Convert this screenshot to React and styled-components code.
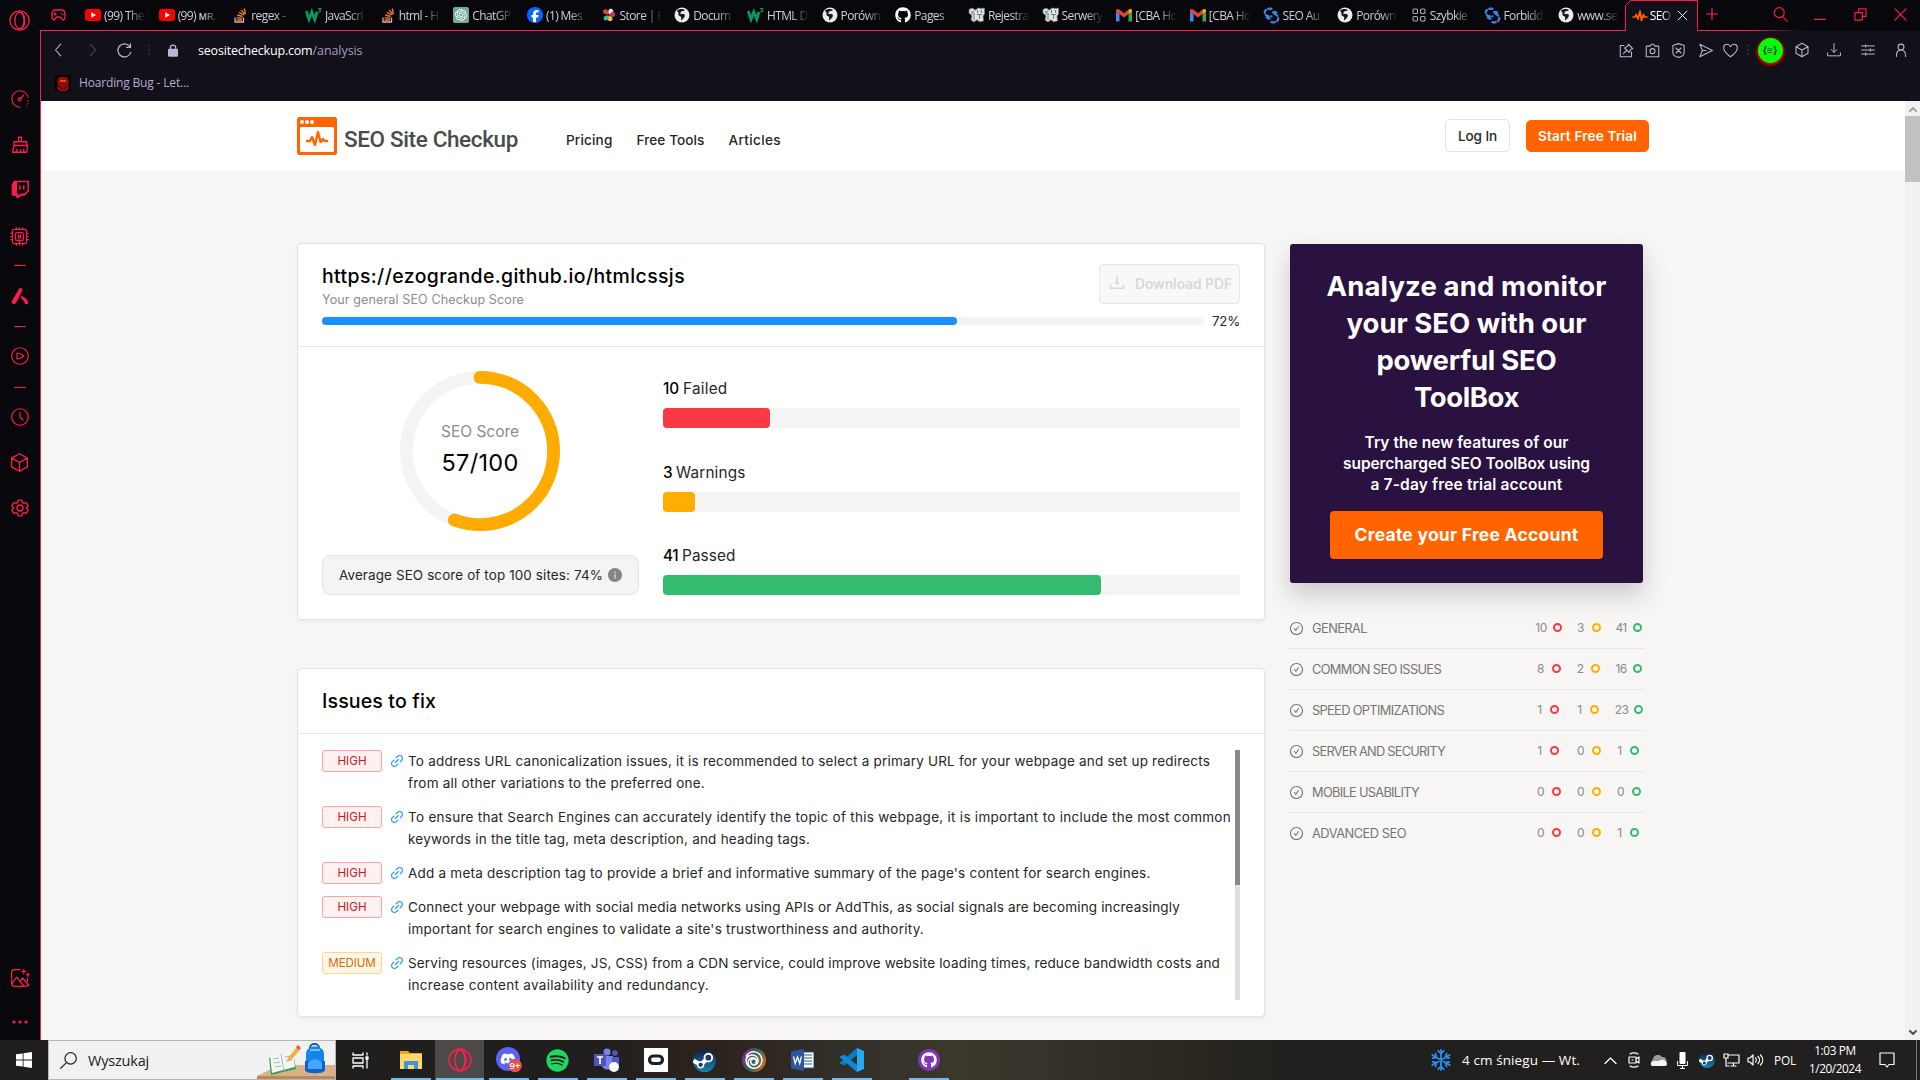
import React, { useLayoutEffect, useRef, useState } from "react";
import styled, { createGlobalStyle } from "styled-components";
import {
  FaFacebook, FaGithub, FaDiscord, FaSpotify,
} from "react-icons/fa6";
import { SiOpenai, SiUbisoft } from "react-icons/si";
import { AiOutlineLink, AiOutlineDownload, AiOutlineCheckCircle, AiFillInfoCircle } from "react-icons/ai";

const RED = "#fa1e4e";
const UI = `"Open Sans", "Noto Sans", sans-serif`;

const Global = createGlobalStyle`
  *, *::before, *::after { box-sizing: border-box; }
  html, body { margin: 0; overflow: hidden; background: #08070c; }
  svg { display: block; flex: none; }
`;

/* ---------- text fitted to a given advance ---------- */
const Line = styled.span`
  display: inline-block;
  white-space: pre;
  flex: none;
  font-size: ${(p) => p.$size || 13}px;
  font-weight: ${(p) => p.$weight || 400};
  color: ${(p) => p.$color || "inherit"};
  font-family: ${(p) => p.$font || "inherit"};
`;

function Fit({ w, size, weight, color, font, children }) {
  const ref = useRef(null);
  const [gap, setGap] = useState(0);
  useLayoutEffect(() => {
    const natural = ref.current.getBoundingClientRect().width - gap * children.length;
    setGap((w - natural) / children.length);
  }, [w, children]);
  return (
    <Line ref={ref} $size={size} $weight={weight} $color={color} $font={font} style={{ letterSpacing: gap }}>
      {children}
    </Line>
  );
}

/* ---------- shell ---------- */
const Screen = styled.div`
  width: 1920px;
  height: 1080px;
  display: flex;
  flex-direction: column;
  overflow: hidden;
  font-family: Inter, sans-serif;
  background: #08070c;
`;
const Browser = styled.div`
  display: flex;
  height: 1040px;
`;
const Column = styled.div`
  flex: 1;
  min-width: 0;
  display: flex;
  flex-direction: column;
`;

/* ---------- left rail ---------- */
const Rail = styled.nav`
  width: 40px;
  flex: none;
  display: flex;
  flex-direction: column;
  align-items: center;
  color: ${RED};
  background: #07070c;
`;
const RailItem = styled.div`
  width: 38px;
  height: ${(p) => p.$h}px;
  padding-right: 1px;
  display: flex;
  align-items: center;
  justify-content: center;
`;
const Dash = styled.i`
  width: 12px;
  height: 1px;
  background: ${RED};
`;
const Spring = styled.div`
  flex: 1;
`;
const Edge = styled.div`
  width: 1px;
  flex: none;
  margin-top: 30px;
  background: ${RED};
`;

/* ---------- tab strip ---------- */
const Strip = styled.div`
  height: 31px;
  display: flex;
  font-family: ${UI};
  color: #cfcdd6;
`;
const StripLead = styled.div`
  width: 37px;
  padding-left: 10px;
  display: flex;
  align-items: center;
  color: ${RED};
  border-bottom: 1px solid ${RED};
`;
const Tab = styled.div`
  width: 73.67px;
  flex: none;
  padding: 1px 0 1px 7px;
  display: flex;
  align-items: center;
  gap: 3px;
  border-bottom: 1px solid ${RED};
`;
const TabIcon = styled.span`
  width: 16px;
  height: 16px;
  flex: none;
  display: flex;
  align-items: center;
  justify-content: center;
`;
const TabLabel = styled.span`
  width: ${(p) => p.$w || 44}px;
  overflow: hidden;
  white-space: nowrap;
  font-size: 12px;
  letter-spacing: -0.6px;
  line-height: 18px;
  padding-top: 1px;
  mask-image: linear-gradient(90deg, #000 55%, transparent 95%);
`;
const ActiveTab = styled.div`
  position: relative;
  width: 72px;
  flex: none;
  padding: 1px 0 1px 7px;
  display: flex;
  align-items: center;
  gap: 2px;
  color: #fff;
`;
const TabShape = styled.svg`
  position: absolute;
  left: 0;
  top: 0;
`;
const Above = styled.span`
  position: relative;
  display: flex;
  align-items: center;
`;
const StripTail = styled.div`
  flex: 1;
  display: flex;
  align-items: center;
  justify-content: space-between;
  padding: 0 0 3px 9px;
  color: ${RED};
  background: linear-gradient(90deg, ${RED}, ${RED} 25%, transparent 48%) left bottom / 100% 1px no-repeat;
`;
const WindowButtons = styled.div`
  display: flex;
  align-items: center;
`;

/* ---------- toolbars ---------- */
const Chrome = styled.div`
  height: 70px;
  background: #121019;
  color: #bdb3d3;
  font-family: ${UI};
`;
const AddressRow = styled.div`
  height: 38px;
  display: flex;
  align-items: center;
  justify-content: space-between;
`;
const AddressLeft = styled.div`
  display: flex;
  align-items: center;
  padding-left: 9px;
`;
const Slot = styled.span`
  width: ${(p) => p.$w}px;
  flex: none;
  display: flex;
  align-items: center;
  justify-content: center;
  opacity: ${(p) => (p.$dim ? 0.35 : 1)};
`;
const Extension = styled.span`
  width: 25px;
  height: 25px;
  border-radius: 50%;
  background: #00ff08;
  box-shadow: 0 1px 3px 1px #f00;
  color: #053a05;
  font: 700 10px/24px Inter, sans-serif;
  text-align: center;
`;
const Bookmarks = styled.div`
  height: 27px;
  padding: 0 0 0 14px;
  display: flex;
  align-items: center;
  gap: 8px;
`;

/* ---------- web page ---------- */
const Viewport = styled.div`
  flex: 1;
  display: flex;
  min-height: 0;
`;
const Page = styled.div`
  flex: 1;
  background: #f7f6f4;
  color: #262626;
`;
const Scroller = styled.div`
  width: 15px;
  background: #f1f1f1;
  display: flex;
  flex-direction: column;
  align-items: center;
`;
const ScrollArrow = styled.div`
  height: 15px;
  width: 15px;
  display: flex;
  align-items: center;
  justify-content: center;
  color: ${(p) => p.$c};
`;
const ScrollThumb = styled.div`
  width: 15px;
  height: 66px;
  background: #c1c1c1;
`;
const SiteHeader = styled.header`
  height: 70px;
  padding: 0 256px 0 256px;
  background: #fff;
  display: flex;
  justify-content: space-between;
`;
const HeadLeft = styled.div`
  display: flex;
  align-items: center;
`;
const BrandText = styled.div`
  width: 229px;
  padding: 5px 0 0 7px;
  display: flex;
`;
const Nav = styled.div`
  display: flex;
  gap: 24px;
  padding-top: 8px;
`;
const HeadRight = styled.div`
  display: flex;
  align-items: flex-start;
  gap: 16px;
  padding-top: 18px;
`;
const HeadButton = styled.button`
  height: ${(p) => (p.$primary ? 32 : 33)}px;
  margin-top: ${(p) => (p.$primary ? 1 : 0)}px;
  width: ${(p) => p.$w}px;
  padding: 0;
  border-radius: 5px;
  border: 1px solid ${(p) => (p.$primary ? "#ff6400" : "#dfe3e3")};
  background: ${(p) => (p.$primary ? "#ff6400" : "#fff")};
  color: ${(p) => (p.$primary ? "#fff" : "#262626")};
  font-family: inherit;
  line-height: 20px;
`;
const Content = styled.main`
  display: flex;
  gap: 25px;
  padding: 72px 0 0 256px;
`;
const MainCol = styled.div`
  width: 968px;
  display: flex;
  flex-direction: column;
  gap: 48px;
`;
const Card = styled.section`
  height: ${(p) => p.$h}px;
  background: #fff;
  border: 1px solid #dfe4e4;
  border-radius: 4px;
  box-shadow: 0 2px 4px rgba(0, 0, 0, 0.05);
`;
const ScoreHead = styled.div`
  height: 103px;
  padding: 20px 24px 0;
  border-bottom: 1px solid #e4e6e6;
`;
const TitleRow = styled.div`
  display: flex;
  justify-content: space-between;
  height: 47px;
`;
const Titles = styled.div`
  display: flex;
  flex-direction: column;
  align-items: flex-start;
  line-height: 24px;
`;
const DownloadButton = styled.div`
  width: 141px;
  height: 40px;
  border: 1px solid #e6e8e8;
  border-radius: 4px;
  background: #f8f8f8;
  color: #d9d9d9;
  display: flex;
  align-items: center;
  gap: 8px;
  padding-left: 7px;
`;
const DownloadGlyph = styled.span`
  padding-bottom: 4px;
`;
const ProgressRow = styled.div`
  display: flex;
  align-items: center;
  gap: 8px;
  height: 20px;
`;
const Track = styled.div`
  width: ${(p) => p.$w}px;
  height: ${(p) => p.$h}px;
  border-radius: ${(p) => p.$r}px;
  background: #f4f4f4;
`;
const Fill = styled.div`
  height: 100%;
  border-radius: inherit;
  background: ${(p) => p.$c};
`;
const ScoreBody = styled.div`
  display: flex;
  padding: 24px 24px 0;
  gap: 24px;
`;
const Gauge = styled.div`
  width: 317px;
  display: flex;
  flex-direction: column;
  align-items: center;
`;
const Ring = styled.div`
  display: grid;
  place-items: center;
  width: 160px;
  height: 160px;
  margin-right: 1px;
  > * { grid-area: 1 / 1; }
`;
const RingText = styled.div`
  display: flex;
  flex-direction: column;
  align-items: center;
  padding-bottom: 8px;
  line-height: 31px;
`;
const Average = styled.div`
  width: 317px;
  height: 40px;
  margin-top: 24px;
  padding-left: 16px;
  border: 1px solid #e4e6e6;
  border-radius: 8px;
  background: #f4f4f4;
  display: flex;
  align-items: center;
  gap: 4px;
  color: #262626;
`;
const Bars = styled.div`
  padding-top: 5px;
`;
const Stat = styled.div`
  height: 83.6px;
`;
const StatLabel = styled.div`
  height: 32px;
  display: flex;
  gap: 4px;
  align-items: flex-start;
  line-height: 26px;
`;
const IssuesHead = styled.div`
  height: 65px;
  padding: 0 0 1px 24px;
  display: flex;
  align-items: center;
  border-bottom: 1px solid #e4e6e6;
  color: #000;
`;
const IssuesBody = styled.div`
  display: flex;
  justify-content: space-between;
  padding: 16px 24px 0;
`;
const IssueList = styled.div`
  display: flex;
  flex-direction: column;
  gap: 12px;
`;
const Issue = styled.div`
  display: flex;
`;
const Tag = styled.div`
  width: 60px;
  height: 22px;
  flex: none;
  display: flex;
  align-items: center;
  justify-content: center;
  border: 1px solid ${(p) => (p.$medium ? "#ffd591" : "#ffa39e")};
  background: ${(p) => (p.$medium ? "#fff7e6" : "#fff1f0")};
  color: ${(p) => (p.$medium ? "#d46b08" : "#cf1322")};
  border-radius: 3px;
`;
const LinkMark = styled.div`
  width: 26px;
  height: 22px;
  padding-left: 7px;
  display: flex;
  align-items: center;
  color: #1890ff;
`;
const IssueText = styled.div`
  display: flex;
  flex-direction: column;
  line-height: 22px;
  align-items: flex-start;
`;
const ListTrack = styled.div`
  width: 5px;
  height: 250px;
  background: #dedede;
`;
const ListThumb = styled.div`
  height: 135px;
  background: #888;
`;
const SideCol = styled.aside`
  width: 355px;
`;
const Promo = styled.section`
  width: 353px;
  height: 339px;
  margin: 1px 0 0 0;
  padding-top: 24px;
  border-radius: 3px;
  background: #291140;
  color: #fff;
  box-shadow: 0 12px 24px rgba(41, 17, 64, 0.2);
  display: flex;
  flex-direction: column;
  align-items: center;
`;
const PromoTitle = styled.div`
  display: flex;
  flex-direction: column;
  align-items: center;
  line-height: 37px;
`;
const PromoText = styled.div`
  display: flex;
  flex-direction: column;
  align-items: center;
  margin-top: 16px;
  line-height: 21px;
`;
const PromoButton = styled.div`
  margin-top: 16px;
  width: 273px;
  height: 48px;
  padding-bottom: 1px;
  border-radius: 4px;
  background: #ff6400;
  display: flex;
  align-items: center;
  justify-content: center;
`;
const Sections = styled.div`
  margin: 25px 0 0 -1px;
  width: 355px;
`;
const SectionRow = styled.div`
  height: 41px;
  display: flex;
  align-items: center;
  border-bottom: ${(p) => (p.$last ? 0 : 1)}px solid #e6e6e5;
  padding-bottom: ${(p) => (p.$last ? 1 : 0)}px;
  color: #757575;
`;
const SectionName = styled.div`
  width: 230px;
  flex: none;
  padding: 0 0 2px 8px;
`;
const Count = styled.div`
  width: ${(p) => (p.$end ? 30 : 40)}px;
  flex: none;
  display: flex;
  align-items: center;
  font-size: 12px;
  color: #8a8a8a;
  padding-bottom: 1px;
`;
const CountNumber = styled.span`
  width: ${(p) => p.$w}px;
  padding-right: 5px;
  text-align: center;
  letter-spacing: -0.6px;
  flex: none;
`;
const Dot = styled.i`
  width: 9px;
  height: 9px;
  flex: none;
  border: 2.5px solid ${(p) => p.$c};
  border-radius: 50%;
`;

/* ---------- taskbar ---------- */
const Taskbar = styled.footer`
  height: 40px;
  display: flex;
  color: #fff;
  font-family: ${UI};
  background: linear-gradient(90deg, #1f1e1c 0, #201f1d 600px, #2a211d 660px, #2c231c 720px, #33302a 850px, #39382a 950px, #35332a 1040px, #29261f 1200px, #21201e 1290px, #211f1f 100%);
`;
const Start = styled.div`
  width: 48px;
  display: flex;
  align-items: center;
  justify-content: center;
`;
const Search = styled.div`
  width: 288px;
  border: 1px solid #b5b5b5;
  background: #f1f1f1;
  color: #222;
  display: flex;
  align-items: center;
  padding-left: 11px;
  gap: 11px;
`;
const SearchText = styled.div`
  width: 158px;
`;
const TaskButton = styled.div`
  width: ${(p) => p.$w || 49}px;
  height: 40px;
  flex: none;
  display: flex;
  align-items: center;
  justify-content: center;
  background: ${(p) =>
    p.$active
      ? "linear-gradient(#76b9ed, #76b9ed) center bottom / 48px 2px no-repeat, #4b4a49"
      : p.$idle
      ? "none"
      : "linear-gradient(#76b9ed, #76b9ed) center bottom / 40px 2px no-repeat"};
`;
const Tray = styled.div`
  margin-left: auto;
  display: flex;
  align-items: center;
`;
const Clock = styled.div`
  width: 66px;
  display: flex;
  flex-direction: column;
  align-items: center;
  line-height: 18px;
  padding-bottom: 2px;
`;
const DesktopEdge = styled.i`
  width: 1px;
  height: 40px;
  background: #777;
`;

/* ---------- drawings ---------- */
const Draw = ({ s = 18, h, vb = "0 0 24 24", w = 1.5, fill = "none", stroke = "currentColor", children }) => (
  <svg width={s} height={h || s} viewBox={vb} fill={fill} stroke={stroke} strokeWidth={w} strokeLinejoin="round" strokeLinecap="round">
    {children}
  </svg>
);

const OperaMark = ({ s = 21 }) => (
  <Draw s={s} w={1.5}>
    <circle cx="12" cy="12" r="11" />
    <ellipse cx="12" cy="12" rx="5.2" ry="9.6" />
    <path d="M12 2.4c8 0 8 19.2 0 19.2" />
  </Draw>
);
const Globe = () => (
  <svg width="16" height="16" viewBox="0 0 16 16">
    <circle cx="8" cy="8" r="7.5" fill="#e9ebee" />
    <path d="M3 3.500c2-1.500 5.500-2 8-.5-1 1.500-4 .5-4.500 2.500-.3 1.600 1 1.200 3 1.300 1.600.2 1.800 2.700.5 4-1 1-1.500 1.700-3 2.700-.3-1.500.7-2.500 0-3.500C6 9 4 8.500 4.500 7 4.800 5.500 3.800 5 3 3.500z" fill="#15131b" />
    <path d="M6.500 6.800c1-.8 2.500-.6 3.500.2" stroke="#e9ebee" strokeWidth="1" fill="none" />
  </svg>
);
const W3 = () => (
  <svg width="17" height="16" viewBox="0 0 17 16" fill="none" stroke="#059862" strokeWidth="2.8">
    <path d="M1.200 4l2.800 8.500L6.800 5l3 7.500L12 5" />
    <path d="M13 1.500h2.800l-1.300 1.700c1.700.3 1.500 2.300-1.500 1.700" strokeWidth="1.100" />
  </svg>
);
const Puzzle = () => (
  <svg width="17" height="16" viewBox="0 0 17 16">
    <g fill="#dfe4de" stroke="#6d7f86" strokeWidth=".7">
      <path d="M1 2.500l3-1.500 3.500 2L10 1l4 .5 2.500-.5v6l-1.500 2 .5 5-4 .8-2.500-2-3 2.200-3-2 1-4-3-3z" />
    </g>
    <path d="M3 4l1.500 2L6 3.500M9.500 3v3M13 3l1 3M6 8v5M11.500 8v4M3 7h4M9 7.500h5" stroke="#5f7a9c" fill="none" />
  </svg>
);
const Swirl = () => (
  <Draw s={17} w={2.300} stroke="#3a86e0" vb="0 0 18 18">
    <path d="M9 2C4 1 1 4 2 7s5 3 7 3M4 11c1 1 3 2 5 1M9 16c5 1 8-2 7-5s-4-4-6-4M14 6c-1-1-3-1-4 0" strokeDasharray="3.500 2.600" />
  </Draw>
);
const GmailM = () => (
  <svg width="16" height="13" viewBox="0 0 16 13">
    <path d="M0 2v10.500h3.500V5z" fill="#4285f4" />
    <path d="M12.500 5v7.500H16V2z" fill="#34a853" />
    <path d="M0 2c0-2 2-2.500 3.500-1.200L8 4.200l4.500-3.400V5L8 8.500 0 2.500z" fill="#ea4335" />
    <path d="M12.500.8C14-.5 16 0 16 2v.5L12.500 5.200z" fill="#fbbc04" />
  </svg>
);
const Pinwheel = () => (
  <svg width="14" height="14" viewBox="0 0 16 16">
    <path d="M7.500 7C4 8 1 6.500 1 3.500 3 .5 7 .500 7.500 7z" fill="#e8452f" />
    <path d="M8 7.500C6 3 8 .8 11 1c3 1.500 3 5-3 6.500z" fill="#fbe9c6" />
    <path d="M8.500 8C10 4 13 4 15 6c.5 4-2.500 6-6.500 2z" fill="#e0218a" />
    <path d="M8 8.500c4 1 5 4 3 6.200-4 1.300-6-2-3-6.200z" fill="#f1c232" />
    <path d="M7.500 8.500C8 13 6 15 3 14 .5 11.500 2 8 7.500 8.500z" fill="#2cc7a1" />
  </svg>
);
const Grid4 = () => (
  <Draw s={14} w={1.100} vb="0 0 14 14" stroke="#aaa9af">
    <rect x="1" y="1" width="4.500" height="4.500" rx="1" /><rect x="8.500" y="1" width="4.500" height="4.500" rx="1" />
    <rect x="1" y="8.500" width="4.500" height="4.500" rx="1" /><rect x="8.500" y="8.500" width="4.500" height="4.500" rx="1" />
  </Draw>
);
const Pulse = ({ s = 16, w = 1.7 }) => (
  <Draw s={s} w={w} vb="0 0 16 16" stroke="#ff6400">
    <path d="M1 9h2l1.200-2.500L6 11 8 3l1.500 9.500L11.500 6.500l1 2.500H15" />
  </Draw>
);
const StackO = () => (
  <svg width="14" height="15" viewBox="0 0 14 15" fill="none" strokeWidth="1.300">
    <path d="M2 9.500V14h8.500V9.500" stroke="#bcbbbb" />
    <path d="M3.500 12h5.500M3.700 9.700l5.400.6M4.300 7l5.300 1.500M6 4.200l4.600 2.800M8.300 2l3.300 4.300M11.300.5l1.100 5.300" stroke="#f48024" />
  </svg>
);
const YouTube = () => (
  <svg width="16" height="12" viewBox="0 0 16 12"><rect width="16" height="12" rx="3" fill="#f00" /><path d="M6.200 3.300v5.400L11 6z" fill="#fff" /></svg>
);
const Gpt = () => (
  <svg width="16" height="16" viewBox="0 0 16 16"><rect width="16" height="16" rx="2" fill="#74aa9c" /><g transform="translate(2 2)"><SiOpenai size={12} color="#fff" /></g></svg>
);
const Fb = () => (
  <svg width="16" height="16" viewBox="0 0 16 16"><circle cx="8" cy="8" r="7.500" fill="#fff" /><FaFacebook size={16} color="#0866ff" /></svg>
);

const TABS = [
  [YouTube, "(99) The"], [YouTube, "(99) ᴍʀ."], [StackO, "regex -"], [W3, "JavaScri"], [StackO, "html - H"],
  [Gpt, "ChatGP"], [Fb, "(1) Mes"], [Pinwheel, "Store | E"], [Globe, "Docum"], [W3, "HTML D"],
  [Globe, "Porówn"], [() => <FaGithub size={16} color="#fff" />, "Pages"], [Puzzle, "Rejestra"], [Puzzle, "Serwery"],
  [GmailM, "[CBA Ho"], [GmailM, "[CBA Ho"], [Swirl, "SEO Au"], [Globe, "Porówn"], [Grid4, "Szybkie"],
  [Swirl, "Forbidd"], [Globe, "www.se"],
];

const Cube = ({ s, w }) => (
  <Draw s={s} w={w}><path d="M12 2l9 5v10l-9 5-9-5V7zM3 7l9 5 9-5M12 12v10" /></Draw>
);

const STATS = [
  ["10", 16, "Failed", 44.5, 107, "#f93943"],
  ["3", 9, "Warnings", 69.5, 32, "#ffae00"],
  ["41", 15, "Passed", 53.5, 438, "#33bb6f"],
];

const ISSUES = [
  ["HIGH", [["To address URL canonicalization issues, it is recommended to select a primary URL for your webpage and set up redirects", 802], ["from all other variations to the preferred one.", 297]]],
  ["HIGH", [["To ensure that Search Engines can accurately identify the topic of this webpage, it is important to include the most common", 823], ["keywords in the title tag, meta description, and heading tags.", 402]]],
  ["HIGH", [["Add a meta description tag to provide a brief and informative summary of the page's content for search engines.", 742.5]]],
  ["HIGH", [["Connect your webpage with social media networks using APIs or AddThis, as social signals are becoming increasingly", 772], ["important for search engines to validate a site's trustworthiness and authority.", 516]]],
  ["MEDIUM", [["Serving resources (images, JS, CSS) from a CDN service, could improve website loading times, reduce bandwidth costs and", 812], ["increase content availability and redundancy.", 301]]],
];

const SECTIONS = [
  ["GENERAL", 55, [["10", 19], ["3", 18], ["41", 19]]],
  ["COMMON SEO ISSUES", 129, [["8", 18], ["2", 17], ["16", 19]]],
  ["SPEED OPTIMIZATIONS", 132, [["1", 16], ["1", 16], ["23", 20]]],
  ["SERVER AND SECURITY", 133, [["1", 16], ["0", 18], ["1", 16]]],
  ["MOBILE USABILITY", 107, [["0", 18], ["0", 18], ["0", 18]]],
  ["ADVANCED SEO", 94, [["0", 18], ["0", 18], ["1", 16]]],
];
const DOTS = ["#f93943", "#ffae00", "#33bb6f"];

const LeftRail = () => (
  <Rail>
    <RailItem $h={40}><OperaMark /></RailItem>
    <RailItem $h={38} />
    <RailItem $h={42}>
      <Draw s={18} w={1.500}><path d="M12 23A11 11 0 1 1 23 10M12 12l5-5" /><circle cx="11.500" cy="12.500" r="2" /><path d="M23 14v.5M22.500 18v.5M20 21v.2" /></Draw>
    </RailItem>
    <RailItem $h={48}>
      <Draw s={18} w={1.700}><path d="M10 9V3h4v6M4 9h17v5H4zM4 14L2 23h19l1-9M7 23l1-4M12.500 23v-3M17 23v-4" /></Draw>
    </RailItem>
    <RailItem $h={42}>
      <svg width="18" height="18" viewBox="0 0 24 24"><path d="M4 1h20v14l-6 6h-4l-4 3H7v-3H1V6z" fill={RED} /><path d="M8 3h14v11l-4 4h-5l-3 3v-3H8z" fill="#07070c" /><path d="M11 7h2v6h-2zM16 7h2v6h-2z" fill={RED} /></svg>
    </RailItem>
    <RailItem $h={52}>
      <Draw s={19} w={1.500}><rect x="3" y="3" width="18" height="18" rx="2" /><rect x="7" y="7" width="10" height="10" rx="2" /><path d="M10.500 9.500v5M13.500 9.500v5M10.500 12h3M8 3V1M12 3V1M16 3V1M8 23v-2M12 23v-6M16 23v-2M3 8H1M3 12H1M3 16H1M23 8h-2M23 12h-2M23 16h-2" /></Draw>
    </RailItem>
    <RailItem $h={6}><Dash /></RailItem>
    <RailItem $h={56}>
      <svg width="18" height="18" viewBox="0 0 24 24" fill={RED}><path d="M11 2c2-2 5 0 4 3L7 21c-2 3-7 2-6-2z" /><path d="M13 12c4 0 9 4 10 9 0 3-4 3-5 0-1-4-5-5-5-9z" /></svg>
    </RailItem>
    <RailItem $h={4}><Dash /></RailItem>
    <RailItem $h={56}>
      <Draw s={18} w={1.600}><circle cx="12" cy="12" r="11" /><path d="M8 8c3 0 6 1 9 4-3 3-6 4-9 4z" /></Draw>
    </RailItem>
    <RailItem $h={6}><Dash /></RailItem>
    <RailItem $h={54}>
      <Draw s={18} w={1.600}><circle cx="12" cy="12" r="11" /><path d="M12 6v6l4 4" /></Draw>
    </RailItem>
    <RailItem $h={36}><Cube s={21} w={1.500} /></RailItem>
    <RailItem $h={55}>
      <Draw s={18} w={1.800}><circle cx="12" cy="12" r="4" /><path d="M9.500 1.500h5l.8 3.200 2 1.100 3.100-.9 2.500 4.300L20.500 12l2.400 2.800-2.500 4.300-3.100-.9-2 1.100-.8 3.200h-5l-.8-3.200-2-1.100-3.100.9-2.500-4.300L3.500 12 1.100 9.200l2.500-4.300 3.100.9 2-1.100z" /></Draw>
    </RailItem>
    <Spring />
    <RailItem $h={52}>
      <Draw s={20} w={1.500}><path d="M12 2H5a3 3 0 0 0-3 3v14a3 3 0 0 0 3 3h14a3 3 0 0 0 2-1M2 19l6-8 8 10M12 16l3-4 8 9M14 4h5M16.500 2v5M20 8h3M21.500 6v4M21 12v4" /></Draw>
    </RailItem>
    <RailItem $h={36}>
      <svg width="16" height="4" viewBox="0 0 16 4" fill={RED}><circle cx="2" cy="2" r="1.600" /><circle cx="8" cy="2" r="1.600" /><circle cx="14" cy="2" r="1.600" /></svg>
    </RailItem>
  </Rail>
);

const TabStrip = () => (
  <Strip>
    <StripLead>
      <Draw s={15} h={12} w={1.300} vb="0 0 15 12"><path d="M4 1h7c2 0 3 2 3 5s-.5 5-1.800 5S10 8 9 8H6C5 8 4 11 2.800 11S1 9 1 6s1-5 3-5zM4 4v2M3 5h2M10 4.500h.1M11.500 5.500h.1" /></Draw>
    </StripLead>
    {TABS.map(([Icon, label], i) => (
      <Tab key={i}><TabIcon><Icon /></TabIcon><TabLabel>{label}</TabLabel></Tab>
    ))}
    <ActiveTab>
      <TabShape width="73" height="31" viewBox="0 0 73 31"><path d="M0 31V5.500L5 .5h67.500V31z" fill="#121019" /><path d="M0 30.500h.5V5.500l5-5h67v30h.5" fill="none" stroke={RED} /></TabShape>
      <Above><TabIcon><Pulse /></TabIcon></Above>
      <Above><TabLabel $w={24}>SEO</TabLabel></Above>
      <Above><Draw s={13} w={1.700} stroke="#fff"><path d="M4 4l16 16M20 4L4 20" /></Draw></Above>
    </ActiveTab>
    <StripTail>
      <Draw s={12} w={1.200} vb="0 0 12 12"><path d="M6 .5v11M.5 6h11" /></Draw>
      <WindowButtons>
        <Slot $w={40}><Draw s={15} w={1.800}><circle cx="10" cy="9" r="8" /><path d="M15 15l8 8" /></Draw></Slot>
        <Slot $w={40}><Draw s={12} w={1.200} vb="0 0 12 12"><path d="M0 11.400h12" /></Draw></Slot>
        <Slot $w={40}><Draw s={13} w={1.200} vb="0 0 14 14"><path d="M1 5h8v8H1zM5 5V1h8v8H9" /></Draw></Slot>
        <Slot $w={40}><Draw s={13} w={1.200} vb="0 0 14 14"><path d="M1 1l12 12M13 1L1 13" /></Draw></Slot>
      </WindowButtons>
    </StripTail>
  </Strip>
);

const Toolbars = () => (
  <Chrome>
    <AddressRow>
      <AddressLeft>
        <Slot $w={18}><Draw s={14} w={1.800}><path d="M15 2L6 12l9 10" /></Draw></Slot>
        <Slot $w={48} $dim><Draw s={14} w={1.800}><path d="M9 2l9 10-9 10" /></Draw></Slot>
        <Slot $w={17}><Draw s={15} w={2}><path d="M20 5a10.500 10.500 0 1 0 2 10M21.500 1v6h-6" /></Draw></Slot>
        <Slot $w={31} $dim><Draw s={2} h={10} vb="0 0 2 10" w={1}><path d="M1 0v1M1 4.500v1M1 9v1" /></Draw></Slot>
        <Slot $w={17}><svg width="10" height="13" viewBox="0 0 11 14"><rect y="5" width="11" height="9" rx="1.500" fill="currentColor" /><path d="M2.500 6V4a3 3 0 0 1 6 0v2" fill="none" stroke="currentColor" strokeWidth="1.400" /></svg></Slot>
        <Slot $w={17} />
        <Fit w={114.5} size={12.5} color="#fff">seositecheckup.com</Fit>
        <Fit w={50} size={12.5} color="#a79dc0">/analysis</Fit>
      </AddressLeft>
      <AddressLeft>
        <Slot $w={26}><Draw s={15} w={1.700}><path d="M8 4H2v18h18v-8M15 2l7 7-3 1-3 5-7-7 5-3zM12 12l-5 5" /></Draw></Slot>
        <Slot $w={26}><Draw s={15} w={1.700}><path d="M2 5h6l2-3h4l2 3h6v17H2z" /><circle cx="12" cy="13" r="4" /></Draw></Slot>
        <Slot $w={27}><Draw s={15} w={1.700}><path d="M12 1l9 3v12c0 4-5 6-9 7-4-1-9-3-9-7V4zM8 8l8 8M16 8l-8 8" /></Draw></Slot>
        <Slot $w={26}><Draw s={15} w={1.700}><path d="M3 2l20 10L3 22l4-10zM7 12h6" /></Draw></Slot>
        <Slot $w={25}><Draw s={15} w={1.700}><path d="M12 22C5 17 1 13 1 8c0-7 8-8 11-2 3-6 11-5 11 2 0 5-4 9-11 14z" /></Draw></Slot>
        <Slot $w={10} $dim><Draw s={2} h={10} vb="0 0 2 10" w={1}><path d="M1 0v1M1 4.500v1M1 9v1" /></Draw></Slot>
        <Slot $w={34}><Extension>{"{≡}"}</Extension></Slot>
        <Slot $w={30}><Cube s={16} w={1.600} /></Slot>
        <Slot $w={34}><Draw s={14} w={1.700}><path d="M12 1v15M7 11l5 5 5-5M1 17v5h22v-5" /></Draw></Slot>
        <Slot $w={34}><Draw s={14} w={1.700}><path d="M1 5h22M1 12h22M1 19h22M8 3v4M16 10v4M8 17v4" /></Draw></Slot>
        <Slot $w={32}><Draw s={14} w={1.900}><circle cx="12" cy="7" r="5" /><path d="M4 23c0-8 3-11 8-11s8 3 8 11" /></Draw></Slot>
        <Slot $w={3} />
      </AddressLeft>
    </AddressRow>
    <Bookmarks>
      <svg width="16" height="16" viewBox="0 0 16 16"><rect width="16" height="16" fill="#0c0000" /><path d="M4 2h8l2 4-1 3 1 5-3 2H5l-3-2 1-5-1-3z" fill="#8d0e0b" /><path d="M5 5h6v2H5z" fill="#e8481c" /><path d="M4 10l3 4M12 10l-3 4" stroke="#260202" /></svg>
      <Fit w={110} size={12} color="#b5abcb">Hoarding Bug - Let...</Fit>
    </Bookmarks>
  </Chrome>
);

const ScoreCard = () => {
  const r = 73.6;
  const arc = 2 * Math.PI * r;
  return (
    <Card $h={377}>
      <ScoreHead>
        <TitleRow>
          <Titles>
            <Fit w={363} size={19.4} weight={500} color="#000">https://ezogrande.github.io/htmlcssjs</Fit>
            <Fit w={202} size={12.600} color="#8c8c8c">Your general SEO Checkup Score</Fit>
          </Titles>
          <DownloadButton>
            <DownloadGlyph><AiOutlineDownload size={20} /></DownloadGlyph>
            <Fit w={97} size={13.800} weight={600}>Download PDF</Fit>
          </DownloadButton>
        </TitleRow>
        <ProgressRow>
          <Track $w={882} $h={8} $r={4}><Fill $c="#1890ff" style={{ width: "72%" }} /></Track>
          <Fit w={28} size={13.300}>72%</Fit>
        </ProgressRow>
      </ScoreHead>
      <ScoreBody>
        <Gauge>
          <Ring>
            <svg width="160" height="160" viewBox="0 0 160 160" fill="none" strokeWidth="12.800">
              <circle cx="80" cy="80" r={r} stroke="#f4f4f4" />
              <circle cx="80" cy="80" r={r} stroke="#ffab00" strokeLinecap="round" strokeDasharray={`${arc * 0.556} ${arc}`} transform="rotate(-90 80 80)" />
            </svg>
            <RingText>
              <Fit w={78} size={15.500} color="#8c8c8c">SEO Score</Fit>
              <Fit w={77} size={23.500} color="#000">57/100</Fit>
            </RingText>
          </Ring>
          <Average>
            <Fit w={264} size={13.400}>Average SEO score of top 100 sites: 74%</Fit>
            <AiFillInfoCircle size={16} color="#858585" />
          </Average>
        </Gauge>
        <Bars>
          {STATS.map(([n, nw, label, lw, fill, c]) => (
            <Stat key={label}>
              <StatLabel>
                <Fit w={nw} size={15.300} weight={500} color="#000">{n}</Fit>
                <Fit w={lw} size={15.300}>{label}</Fit>
              </StatLabel>
              <Track $w={577} $h={20} $r={4}><Fill $c={c} style={{ width: fill }} /></Track>
            </Stat>
          ))}
        </Bars>
      </ScoreBody>
    </Card>
  );
};

const IssuesCard = () => (
  <Card $h={349}>
    <IssuesHead><Fit w={114} size={19.600} weight={500}>Issues to fix</Fit></IssuesHead>
    <IssuesBody>
      <IssueList>
        {ISSUES.map(([level, lines], i) => (
          <Issue key={i}>
            <Tag $medium={level === "MEDIUM"}><Fit w={level === "HIGH" ? 29 : 47.5} size={11.600}>{level}</Fit></Tag>
            <LinkMark><AiOutlineLink size={16} /></LinkMark>
            <IssueText>
              {lines.map(([t, w]) => <Fit key={t} w={w} size={13.500}>{t}</Fit>)}
            </IssueText>
          </Issue>
        ))}
      </IssueList>
      <ListTrack><ListThumb /></ListTrack>
    </IssuesBody>
  </Card>
);

const Side = () => (
  <SideCol>
    <Promo>
      <PromoTitle>
        <Fit w={280} size={27.500} weight={700}>Analyze and monitor</Fit>
        <Fit w={240} size={27.500} weight={700}>your SEO with our</Fit>
        <Fit w={180} size={27.500} weight={700}>powerful SEO</Fit>
        <Fit w={105} size={27.500} weight={700}>ToolBox</Fit>
      </PromoTitle>
      <PromoText>
        <Fit w={204} size={15.500} weight={600}>Try the new features of our</Fit>
        <Fit w={247} size={15.500} weight={600}>supercharged SEO ToolBox using</Fit>
        <Fit w={192} size={15.500} weight={600}>a 7-day free trial account</Fit>
      </PromoText>
      <PromoButton><Fit w={224} size={17.500} weight={700}>Create your Free Account</Fit></PromoButton>
    </Promo>
    <Sections>
      {SECTIONS.map(([name, w, counts], i) => (
        <SectionRow key={name} $last={i === SECTIONS.length - 1}>
          <AiOutlineCheckCircle size={15} />
          <SectionName><Fit w={w} size={12.800}>{name}</Fit></SectionName>
          {counts.map(([n, cw], k) => (
            <Count key={k} $end={k === 2}><CountNumber $w={cw}>{n}</CountNumber><Dot $c={DOTS[k]} /></Count>
          ))}
        </SectionRow>
      ))}
    </Sections>
  </SideCol>
);

const SteamIcon = ({ s }) => (
  <svg width={s} height={s} viewBox="0 0 24 24">
    <defs><linearGradient id="steam" x1="0" y1="0" x2="0" y2="1"><stop offset="0" stopColor="#151a3d" /><stop offset="1" stopColor="#1387b8" /></linearGradient></defs>
    <circle cx="12" cy="12" r="12" fill="url(#steam)" />
    <path d="M.5 12l7.500 4.500L16 9" stroke="#fff" strokeWidth="4.500" fill="none" />
    <circle cx="16" cy="9" r="4" fill="#1a3a64" stroke="#fff" strokeWidth="2" />
    <circle cx="8" cy="16.500" r="3" fill="#1a3a64" stroke="#fff" strokeWidth="1.500" />
  </svg>
);

const Bar = () => (
  <Taskbar>
    <Start><svg width="16" height="16" viewBox="0 0 16 16" fill="#fff"><path d="M0 2.300L6.700 1.400v6.200H0zM7.500 1.300L16 0v7.600H7.500zM0 8.400h6.700v6.200L0 13.700zM7.500 8.400H16V16l-8.500-1.200z" /></svg></Start>
    <Search>
      <Draw s={17} w={1.700}><circle cx="15" cy="9" r="8" /><path d="M9 15l-8 8" /></Draw>
      <SearchText><Fit w={61} size={14.500}>Wyszukaj</Fit></SearchText>
      <svg width="78" height="38" viewBox="0 0 78 38">
        <path d="M0 35L22 24h56v14H0z" fill="#d9b184" /><path d="M0 35h78v3H0z" fill="#b98a5c" />
        <path d="M12 17l12-3 12-3 3 17-13 3-12 3z" fill="#3a9a58" /><path d="M13 15l11-2 12-3 2 16-12 3-11 3z" fill="#f4f6f2" />
        <path d="M24 13l3 17M16 18l6-1M17 22l6-1M18 26l6-1M28 16l6-1M29 20l6-1" stroke="#a9b6c2" fill="none" />
        <path d="M31 17l9-11 3 3-9 10-4 1z" fill="#f6ae35" /><path d="M39 6l2-2 3 3-2 2z" fill="#e6534e" />
        <rect x="53" y="3" width="9" height="8" rx="4" fill="none" stroke="#1460b5" strokeWidth="2" />
        <path d="M49 13c0-10 18-10 18 0v17c0 3-18 3-18 0z" fill="#1684ee" /><path d="M48 20h20v9c0 4-20 4-20 0z" fill="#0c63d0" />
        <path d="M51 22c5-5 10-5 14 0v6H51z" fill="#45a7ff" /><path d="M53 9h10" stroke="#72c4ff" strokeWidth="2" />
      </svg>
    </Search>
    <TaskButton $w={48} $idle>
      <Draw s={17} w={1.300} vb="0 0 17 17" stroke="#fff"><path d="M1 3V1M11 3V1M1 3h10M1 16v-2h10v2M1 6h10v5H1zM15 1v2M15 8v8" /><path d="M14 5h2v2h-2z" fill="#fff" /></Draw>
    </TaskButton>
    <TaskButton $w={2} $idle />
    <TaskButton><svg width="22" height="18" viewBox="0 0 22 18"><path d="M0 0h8l2 2h12v16H0z" fill="#e9a912" /><path d="M0 3h22v15H0z" fill="#ffd869" /><path d="M4 18v-8h14v8h-4v-4H8v4z" fill="#3a96dd" /></svg></TaskButton>
    <TaskButton $active><Draw s={24} w={1.500} stroke={RED}><circle cx="12" cy="12" r="11" /><ellipse cx="12" cy="12" rx="5" ry="10" /><path d="M12 2c8 0 8 20 0 20" /></Draw></TaskButton>
    <TaskButton>
      <svg width="26" height="26" viewBox="0 0 26 26"><circle cx="12" cy="12" r="12" fill="#5865f2" /><g transform="translate(4 4)"><FaDiscord size={16} color="#fff" /></g><circle cx="19" cy="18.500" r="6.800" fill="#e6504c" /><text x="19" y="22" textAnchor="middle" fontFamily="Open Sans" fontSize="9.500" fontWeight="600" fill="#fff">9+</text></svg>
    </TaskButton>
    <TaskButton><FaSpotify size={23} color="#1ed760" /></TaskButton>
    <TaskButton>
      <svg width="25" height="24" viewBox="0 0 25 24"><circle cx="13" cy="4" r="3.500" fill="#7b83eb" /><circle cx="21" cy="5" r="2.700" fill="#5059c9" /><path d="M8 8h11v9c0 6-11 6-11 0z" fill="#7b83eb" /><path d="M18 9h7v7c0 4-6 4-7 1z" fill="#5059c9" /><rect y="6" width="12" height="12" rx="1" fill="#4b53bc" /><path d="M3 9h6M6 9v7" stroke="#fff" strokeWidth="1.700" /><circle cx="20" cy="19" r="5" fill="#fff" /></svg>
    </TaskButton>
    <TaskButton><svg width="24" height="24" viewBox="0 0 24 24"><rect width="24" height="24" fill="#fff" /><rect x="5.500" y="8" width="13" height="7.500" rx="3.700" fill="none" stroke="#1c2024" strokeWidth="3.200" /></svg></TaskButton>
    <TaskButton><SteamIcon s={23} /></TaskButton>
    <TaskButton>
      <svg width="24" height="24" viewBox="0 0 24 24"><defs><linearGradient id="ubi" x1="0" y1=".3" x2="1" y2=".7"><stop offset="0" stopColor="#7b2a9a" /><stop offset=".5" stopColor="#2a6b5c" /><stop offset="1" stopColor="#e0662a" /></linearGradient></defs><circle cx="12" cy="12" r="12" fill="url(#ubi)" /><g transform="translate(3 3)"><SiUbisoft size={18} color="#fff" /></g></svg>
    </TaskButton>
    <TaskButton>
      <svg width="23" height="22" viewBox="0 0 23 22"><path d="M12 3h11v16H12z" fill="#fff" stroke="#2b579a" /><path d="M13 6h8M13 9h8M13 12h8M13 15h8" stroke="#2b579a" /><path d="M0 2.500L13 0v22L0 19.500z" fill="#2b579a" /><path d="M2.500 7.500l1.700 7L6.500 8l2.200 6.500 1.700-7" stroke="#fff" strokeWidth="1.300" fill="none" /></svg>
    </TaskButton>
    <TaskButton>
      <svg width="24" height="24" viewBox="0 0 24 24"><path d="M17 0l7 3v18l-7 3z" fill="#2aa9f2" /><path d="M17 0v7L4 17.500 0 15.500v-1z" fill="#0a7bc4" /><path d="M17 24v-7L4 6.500 0 8.500v1z" fill="#0f8ad6" /></svg>
    </TaskButton>
    <TaskButton $w={28} $idle />
    <TaskButton><svg width="22" height="22" viewBox="0 0 22 22"><circle cx="11" cy="11" r="11" fill="#8334b5" /><g transform="translate(3 3)"><FaGithub size={16} color="#fff" /></g></svg></TaskButton>
    <Tray>
      <Draw s={22} w={2} stroke="#2b8cf0"><path d="M12 1v22M2.500 6.500l19 11M21.500 6.500l-19 11M9 2l3 3 3-3M9 22l3-3 3 3M3 10l4-1-1-4M21 14l-4 1 1 4M21 10l-4-1 1-4M3 14l4 1-1 4" /></Draw>
      <Slot $w={10} />
      <Fit w={118} size={13.500}>4 cm śniegu — Wt.</Fit>
      <Slot $w={18} />
      <Slot $w={24}><Draw s={13} w={1.300} vb="0 0 13 13"><path d="M1 9.500L6.500 4 12 9.500" /></Draw></Slot>
      <Slot $w={24}><Draw s={14} h={16} w={1.200} vb="0 0 14 16"><path d="M3 2c2-1.500 6-1.500 8 0M3 14c2 1.500 6 1.500 8 0M2 5h7v6H2zM9 7l3-2v6L9 9M5 8h1" /></Draw></Slot>
      <Slot $w={24}><svg width="17" height="11" viewBox="0 0 17 11"><path d="M3 10a3.500 3.500 0 0 1 0-6 5 5 0 0 1 9-2 4 4 0 0 1 1 8z" fill="#9a9a9a" /><path d="M2 11c-2-1-2-5 3-5l4 0c3-3 8 0 8 3 0 1-1 2-2 2z" fill="#f3f3f3" /></svg></Slot>
      <Slot $w={24}><svg width="11" height="17" viewBox="0 0 11 17"><rect x="2.500" width="6" height="12" rx="1" fill="#fff" /><path d="M.6 9v4.500h9.800V9M5.500 13.500v3M3 16.400h5" fill="none" stroke="#fff" /></svg></Slot>
      <Slot $w={25}><SteamIcon s={16} /></Slot>
      <Slot $w={24}><Draw s={17} h={14} w={1.200} vb="0 0 17 14"><path d="M5 2h11v8H5M8 13h5M10.500 10v3M1 1h4v4H1zM3 5v8h3" /></Draw></Slot>
      <Slot $w={24}><Draw s={17} h={14} w={1.200} vb="0 0 17 14"><path d="M1 5h2l3-3v10L3 9H1zM8.500 5c1 1 1 3 0 4M11 3.500c2 2 2 5 0 7M13.500 2c3 3 3 7 0 10" /></Draw></Slot>
      <Slot $w={7} />
      <Fit w={22} size={11.800}>POL</Fit>
      <Slot $w={6} />
      <Clock><Fit w={41.500} size={11.800}>1:03 PM</Fit><Fit w={52} size={11.800}>1/20/2024</Fit></Clock>
      <Slot $w={38}><Draw s={16} h={16} w={1.200} vb="0 0 16 16"><path d="M1 1h14v11.500H10L8 15l-2-2.500H1z" /></Draw></Slot>
      <Slot $w={10} />
      <DesktopEdge />
      <Slot $w={3} />
    </Tray>
  </Taskbar>
);

export default function App() {
  return (
    <Screen>
      <Global />
      <Browser>
        <LeftRail />
        <Edge />
        <Column>
          <TabStrip />
          <Toolbars />
          <Viewport>
            <Page>
              <SiteHeader>
                <HeadLeft>
                  <svg width="40" height="38" viewBox="0 0 40 38"><rect width="40" height="38" rx="2.500" fill="#ff6400" /><rect x="3" y="10" width="34" height="25" rx="1.500" fill="#fff" /><g fill="#fff"><circle cx="5" cy="5" r="2" /><circle cx="10" cy="5" r="2" /><circle cx="15" cy="5" r="2" /></g><path d="M10 24h3l2-4 3 8 3-13 2.500 10L26 22l1.500 2H30" fill="none" stroke="#ff6400" strokeWidth="2.400" strokeLinejoin="round" strokeLinecap="round" /></svg>
                  <BrandText><Fit w={174} size={22.500} weight={500} font="Roboto, sans-serif" color="#484c4c">SEO Site Checkup</Fit></BrandText>
                  <Nav>
                    <Fit w={46.500} size={13.600} weight={500}>Pricing</Fit>
                    <Fit w={68} size={13.600} weight={500}>Free Tools</Fit>
                    <Fit w={52.500} size={13.600} weight={500}>Articles</Fit>
                  </Nav>
                </HeadLeft>
                <HeadRight>
                  <HeadButton $w={65}><Fit w={39} size={13.600} weight={500}>Log In</Fit></HeadButton>
                  <HeadButton $w={123} $primary><Fit w={99} size={13.600} weight={600}>Start Free Trial</Fit></HeadButton>
                </HeadRight>
              </SiteHeader>
              <Content>
                <MainCol>
                  <ScoreCard />
                  <IssuesCard />
                </MainCol>
                <Side />
              </Content>
            </Page>
            <Scroller>
              <ScrollArrow $c="#a3a3a3"><Draw s={8} h={6} vb="0 0 8 6" w={2}><path d="M1 5l3-3 3 3" /></Draw></ScrollArrow>
              <ScrollThumb />
              <Spring />
              <ScrollArrow $c="#505050"><Draw s={8} h={6} vb="0 0 8 6" w={2}><path d="M1 1l3 3 3-3" /></Draw></ScrollArrow>
            </Scroller>
          </Viewport>
        </Column>
      </Browser>
      <Bar />
    </Screen>
  );
}
